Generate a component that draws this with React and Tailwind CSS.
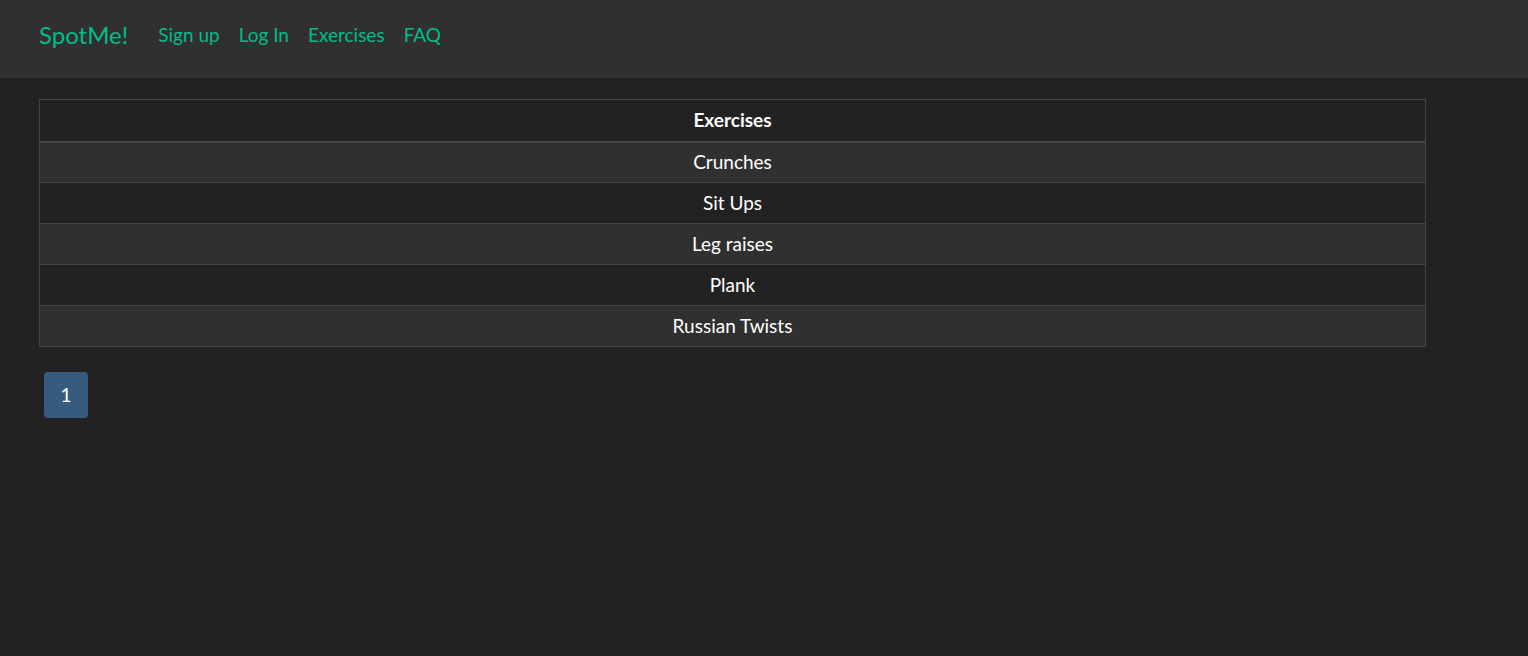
const exercises = ['Crunches', 'Sit Ups', 'Leg raises', 'Plank', 'Russian Twists']

export default function App() {
  return (
    <div className="min-h-[656px] bg-[#222222] text-white" style={{ fontFamily: 'Lato, "Liberation Sans", sans-serif' }}>
      {/* Navbar */}
      <nav className="h-[78px] bg-[#303030] flex items-center pl-[39px] pb-[8px]">
        <a className="text-[24px] text-[#00bc8c] mr-[30px]">SpotMe!</a>
        <div className="flex items-center gap-[19px] text-[19px] text-[#00bc8c]">
          <a>Sign up</a>
          <a>Log In</a>
          <a>Exercises</a>
          <a>FAQ</a>
        </div>
      </nav>

      <div className="pl-[39px] pt-[21px]">
        <table className="w-[1387px] border-collapse border border-[#444444] text-[19px]">
          <thead>
            <tr>
              <th className="h-[42px] border-b-2 border-[#444444] font-bold text-center">Exercises</th>
            </tr>
          </thead>
          <tbody>
            {exercises.map((name, i) => (
              <tr key={name} className={i % 2 === 0 ? 'bg-[#303030]' : ''}>
                <td className="h-[41px] border-t border-[#444444] text-center">{name}</td>
              </tr>
            ))}
          </tbody>
        </table>

        {/* Pagination */}
        <div className="mt-[25px] ml-[5px]">
          <button className="w-[44px] h-[46px] rounded-[4px] bg-[#375a7f] text-[19px] text-white">1</button>
        </div>
      </div>
    </div>
  )
}
